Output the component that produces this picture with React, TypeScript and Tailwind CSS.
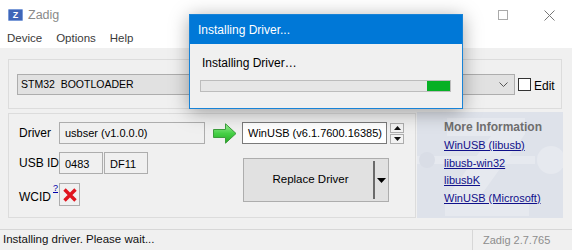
import React from "react";

const links = ["WinUSB (libusb)", "libusb-win32", "libusbK", "WinUSB (Microsoft)"];

function GreenArrow() {
  return (
    <svg width="24" height="21" viewBox="0 0 24 21">
      <defs>
        <linearGradient id="ga" x1="0" y1="0" x2="0" y2="1">
          <stop offset="0" stopColor="#9ff09a" />
          <stop offset="0.5" stopColor="#46d046" />
          <stop offset="1" stopColor="#22a822" />
        </linearGradient>
      </defs>
      <path d="M0.5 6.5 H12.5 V0.8 L23 10.5 L12.5 20.2 V14.5 H0.5 Z" fill="url(#ga)" stroke="#3c9c3c" strokeWidth="1" />
    </svg>
  );
}

function RedCross() {
  return (
    <svg width="14" height="14" viewBox="0 0 14 14">
      <path d="M1.5 1.5 L12.5 12.5 M12.5 1.5 L1.5 12.5" stroke="#e0141e" strokeWidth="3.4" />
    </svg>
  );
}

export default function App() {
  return (
    <div className="w-[572px] h-[250px] relative overflow-hidden bg-[#f0f0f0] flex flex-col font-['Liberation_Sans',Arial,sans-serif] text-[12px] text-black">
      {/* Title bar */}
      <div className="h-[30px] bg-white flex items-center">
        <div className="ml-[8px] w-[15px] h-[12px] rounded-[1px] bg-[#3f66b8] border border-[#7b9bd8] flex items-center justify-center text-white text-[9px] font-bold leading-none">
          Z
        </div>
        <span className="ml-[5px] text-[#8a8a8a] text-[12.5px]">Zadig</span>
        <div className="ml-auto flex h-full">
          <div className="w-[46px] flex items-center justify-center">
            <div className="w-[10px] h-px bg-[#999]" />
          </div>
          <div className="w-[46px] flex items-center justify-center">
            <div className="w-[10px] h-[10px] border border-[#aaa]" />
          </div>
          <div className="w-[46px] flex items-center justify-center">
            <svg width="11" height="11" viewBox="0 0 11 11">
              <path d="M0.5 0.5 L10.5 10.5 M10.5 0.5 L0.5 10.5" stroke="#777" strokeWidth="1" />
            </svg>
          </div>
        </div>
      </div>

      {/* Menu bar */}
      <div className="h-[18px] bg-white flex items-start text-[#3a3a3a] text-[11.5px]">
        <span className="ml-[7px]">Device</span>
        <span className="ml-[14px]">Options</span>
        <span className="ml-[14px]">Help</span>
      </div>

      {/* Device group */}
      <div className="mt-[11px] ml-[8px] w-[554px] h-[50px] border border-[#dcdcdc] flex items-start pt-[14px] pl-[8px]">
        <div className="w-[498px] h-[21px] border border-[#adadad] bg-[#e1e1e1] flex items-center pl-[3px] pr-[6px]">
          <span className="whitespace-pre text-[10.5px]">STM32  BOOTLOADER</span>
          <svg className="ml-auto" width="9" height="6" viewBox="0 0 9 6">
            <path d="M0.5 0.5 L4.5 4.5 L8.5 0.5" fill="none" stroke="#555" strokeWidth="1" />
          </svg>
        </div>
        <div className="ml-[3px] mt-[4px] w-[13px] h-[13px] border border-[#333] bg-white" />
        <span className="ml-[3px] mt-[3px]">Edit</span>
      </div>

      {/* Driver group + info */}
      <div className="mt-[4px] flex">
        <div className="ml-[8px] w-[408px] h-[105px] border border-[#dcdcdc] flex flex-col">
          <div className="mt-[8px] pl-[10px] flex items-center">
            <span className="w-[40px]">Driver</span>
            <div className="w-[146px] h-[22px] border border-[#adadad] flex items-center pl-[5px] text-[11px] whitespace-nowrap">
              usbser (v1.0.0.0)
            </div>
            <div className="ml-[8px]">
              <GreenArrow />
            </div>
            <div className="ml-[5px] w-[145px] h-[22px] border border-[#7a7a7a] bg-white flex items-center pl-[5px] text-[11px] whitespace-nowrap">
              WinUSB (v6.1.7600.16385)
            </div>
            <div className="ml-[3px] w-[14px] flex flex-col gap-px">
              <div className="h-[10px] border border-[#adadad] bg-[#f3f3f3] flex items-center justify-center">
                <svg width="7" height="4" viewBox="0 0 7 4">
                  <path d="M0 4 L3.5 0 L7 4 Z" fill="#111" />
                </svg>
              </div>
              <div className="h-[10px] border border-[#adadad] bg-[#f3f3f3] flex items-center justify-center">
                <svg width="7" height="4" viewBox="0 0 7 4">
                  <path d="M0 0 L3.5 4 L7 0 Z" fill="#111" />
                </svg>
              </div>
            </div>
          </div>

          <div className="mt-[8px] flex">
            <div className="w-[234px] pl-[10px] flex flex-col">
              <div className="flex items-center">
                <span className="w-[40px]">USB ID</span>
                <div className="w-[44px] h-[22px] border border-[#adadad] pl-[5px] pt-[3px] text-[11px]">0483</div>
                <div className="ml-px w-[44px] h-[22px] border border-[#adadad] pl-[5px] pt-[3px] text-[11px]">DF11</div>
              </div>
              <div className="mt-[9px] flex items-center">
                <span className="w-[40px] flex items-start">
                  <span className="mt-[4px]">WCID</span>
                  <span className="ml-[2px] text-[9px] leading-none text-[#0000aa] underline">?</span>
                </span>
                <div className="w-[21px] h-[23px] border border-[#adadad] flex items-center justify-center">
                  <RedCross />
                </div>
              </div>
            </div>
            <div className="mt-[6px] w-[146px] h-[44px] border border-[#adadad] bg-[#e1e1e1] flex items-center">
              <span className="flex-1 text-center pl-[4px] text-[11.5px]">Replace Driver</span>
              <div className="w-[2px] h-[38px] bg-[#6a6a6a]" />
              <div className="w-[13px] flex justify-center">
                <svg width="9" height="5" viewBox="0 0 9 5">
                  <path d="M0 0 L9 0 L4.5 5 Z" fill="#000" />
                </svg>
              </div>
            </div>
          </div>
        </div>

        {/* More Information panel */}
        <div className="ml-px w-[146px] h-[106px] -mt-px bg-[#dee2ea] relative overflow-hidden">
          <svg className="absolute inset-0" width="146" height="106" viewBox="0 0 146 106">
            <path d="M30 6 H108 V22 L62 86 H112 V104 H28 V88 L74 24 H30 Z" fill="#e6e9ef" />
            <path d="M0 44 H118 V52 H0 Z" fill="#e6e9ef" />
            <circle cx="134" cy="48" r="14" fill="#e6e9ef" />
            <circle cx="10" cy="48" r="8" fill="#d9dde6" />
          </svg>
          <div className="relative pt-[8px] pl-[27px] flex flex-col">
            <span className="font-bold text-[#6e6e6e] leading-[14px]">More Information</span>
            <div className="flex flex-col mt-[3px] text-[11px]">
              {links.map((l) => (
                <span key={l} className="h-[17.6px] leading-[17px] text-[#10108a] underline">
                  {l}
                </span>
              ))}
            </div>
          </div>
        </div>
      </div>

      {/* Status bar */}
      <div className="mt-auto h-[21px] border-t border-[#d7d7d7] flex items-center">
        <span className="flex-1 pl-[3px] text-[#111] text-[11.5px]">Installing driver. Please wait...</span>
        <div className="w-[100px] h-full border-l border-[#d7d7d7] pl-[10px] flex items-center text-[#8d8d8d] text-[11px]">
          Zadig 2.7.765
        </div>
      </div>

      {/* Installing dialog */}
      <div className="absolute left-[189px] top-[14px] w-[274px] h-[95px] border border-[#1883d7] bg-[#f0f0f0] shadow-[0_3px_18px_rgba(0,0,0,0.35)] flex flex-col">
        <div className="h-[29px] bg-[#0078d7] text-white flex items-center pl-[8px]">
          Installing Driver...
        </div>
        <span className="mt-[12px] pl-[12px] leading-[15px]">Installing Driver…</span>
        <div className="mt-[9px] ml-[10px] w-[251px] h-[12px] border border-[#bcbcbc] bg-[#e6e6e6] flex justify-end">
          <div className="w-[23px] h-full bg-[#06b025]" />
        </div>
      </div>
    </div>
  );
}
